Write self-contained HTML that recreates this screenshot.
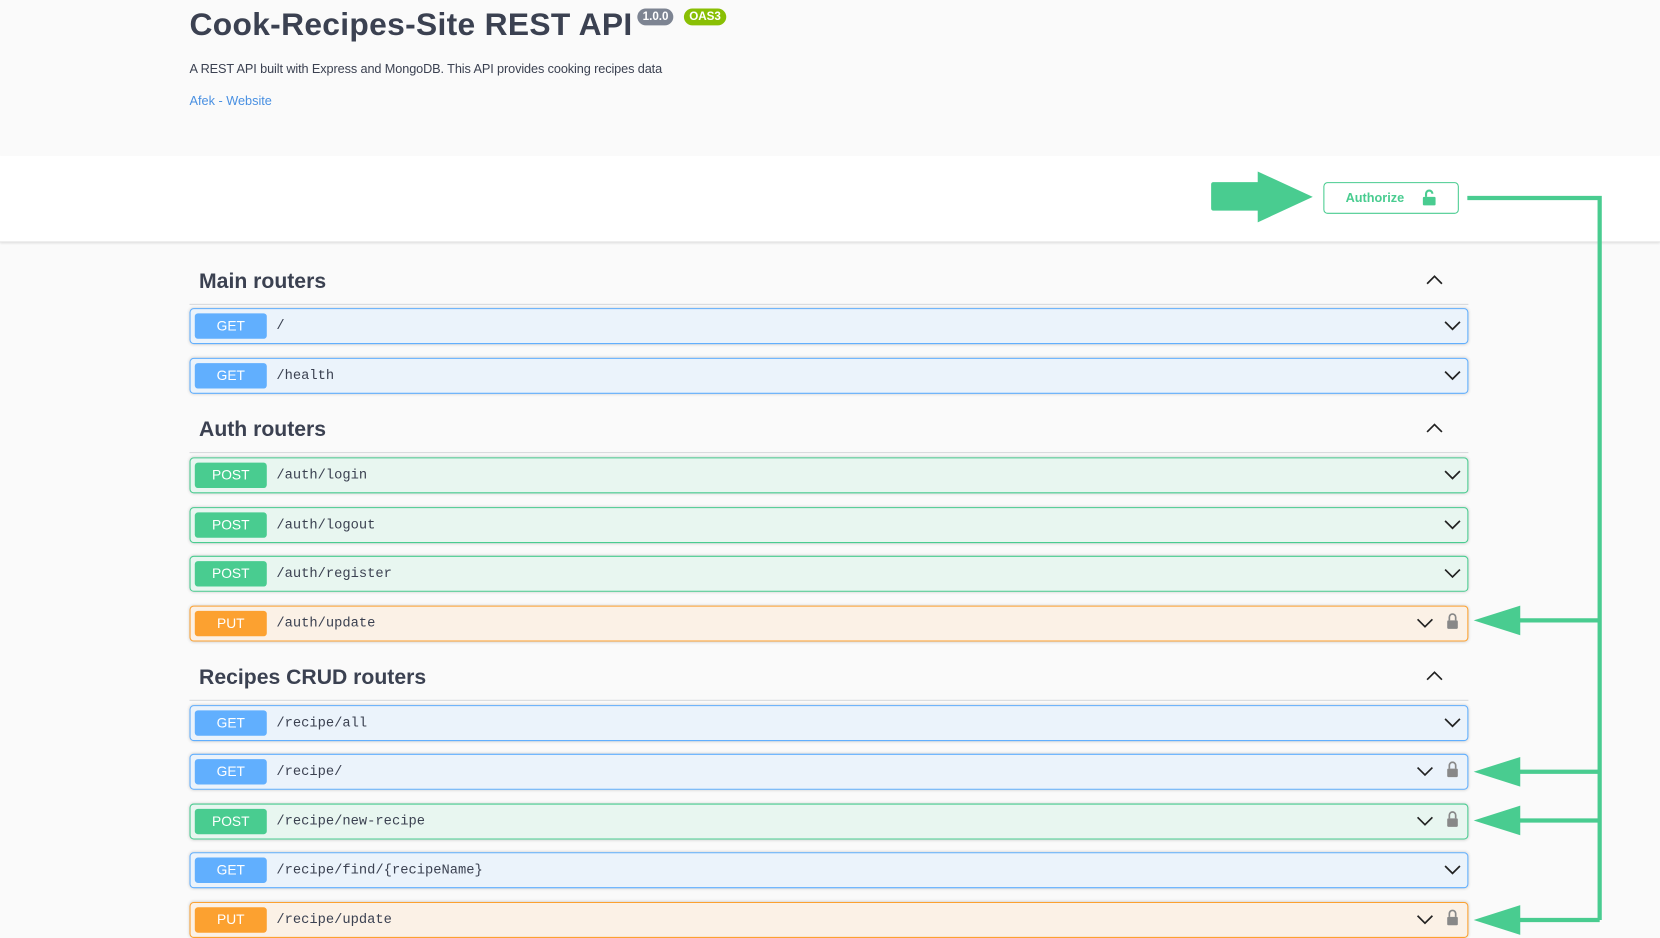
<!DOCTYPE html>
<html><head><meta charset="utf-8"><style>
html,body{margin:0;padding:0;width:1660px;height:936px;overflow:hidden;background:#fafafa;font-family:"Liberation Sans",sans-serif}
#w{position:absolute;left:0;top:0;width:1568px;height:884px;transform:scale(1.05868);transform-origin:0 0}
.a{position:absolute}
h1{position:absolute;left:179px;top:7px;margin:0;font-size:30px;font-weight:bold;color:#3b4151;letter-spacing:0.3px}
.badge{position:absolute;font-size:11px;font-weight:bold;color:#fff;border-radius:8px;padding:1px 5px;line-height:14px}
.band{position:absolute;left:0;top:147px;width:1568px;height:81px;background:#fff;border-bottom:1px solid #e3e3e3;box-shadow:0 1px 2px rgba(0,0,0,.1)}
.sec{position:absolute;left:179px;width:1208px;border-bottom:1px solid #d7d9dc;height:40px}
.sec span{position:absolute;left:9px;top:8px;font-size:20px;font-weight:bold;color:#3b4151}
.row{position:absolute;left:179px;width:1206px;height:32px;border:1px solid;border-radius:4px;box-shadow:0 0 3px rgba(0,0,0,.19)}
.m{position:absolute;left:4px;top:4px;width:68px;height:24px;border-radius:3px;color:#fff;font-size:13px;text-align:center;line-height:24px}
.p{position:absolute;left:81px;top:8px;font-family:"Liberation Mono",monospace;font-size:13px;color:#3b4151}
.get{background:#ebf3fb;border-color:#61affe}.get .m{background:#61affe}
.post{background:#e8f6f0;border-color:#49cc90}.post .m{background:#49cc90}
.put{background:#fbf1e6;border-color:#fca130}.put .m{background:#fca130}
.chev{position:absolute;top:11px}
</style></head><body><div id="w">
<h1>Cook-Recipes-Site REST API</h1>
<div class="badge" style="left:602px;top:8px;background:#7d8492">1.0.0</div>
<div class="badge" style="left:646px;top:8px;background:#89bf04">OAS3</div>
<div class="a" style="left:179px;top:58px;font-size:12px;color:#3b4151;letter-spacing:-0.1px">A REST API built with Express and MongoDB. This API provides cooking recipes data</div>
<div class="a" style="left:179px;top:88px;font-size:12px;color:#4990e2">Afek - Website</div>
<div class="band"></div>
<div class="a" style="left:1250px;top:172px;width:126px;height:28px;border:1px solid #49cc90;border-radius:4px;background:#fff"><span class="a" style="left:20px;top:7px;font-size:12px;font-weight:bold;color:#49cc90">Authorize</span>
<svg class="a" style="left:92px;top:6px" width="14" height="16" viewBox="0 0 14 16"><path d="M4 7V4a3 3 0 0 1 6 0" fill="none" stroke="#49cc90" stroke-width="2"/><rect x="1" y="7" width="12" height="8" rx="1" fill="#49cc90"/></svg></div>
<svg class="a" style="left:0;top:0" width="1568" height="884">
<g fill="#49cc90" stroke="none">
<rect x="1144" y="172" width="48" height="27" rx="2"/><polygon points="1188,162 1240,186 1188,210"/>
</g>
<path d="M1386 187H1511V869M1511 586H1430M1511 729H1430M1511 775H1430M1511 869H1430" stroke="#49cc90" stroke-width="4" fill="none"/>
<g fill="#49cc90">
<polygon points="1392,586 1436,572 1436,600"/><polygon points="1392,729 1436,715 1436,743"/><polygon points="1392,775 1436,761 1436,789"/><polygon points="1392,869 1436,855 1436,883"/>
</g>
</svg>

<div class="sec" style="top:247px"><span>Main routers</span><svg class="a" style="left:1168px;top:12px" width="16" height="10"><path d="M1 9L8 2l7 7" fill="none" stroke="#222" stroke-width="1.6"/></svg></div>
<div class="sec" style="top:387px"><span>Auth routers</span><svg class="a" style="left:1168px;top:12px" width="16" height="10"><path d="M1 9L8 2l7 7" fill="none" stroke="#222" stroke-width="1.6"/></svg></div>
<div class="sec" style="top:621px"><span>Recipes CRUD routers</span><svg class="a" style="left:1168px;top:12px" width="16" height="10"><path d="M1 9L8 2l7 7" fill="none" stroke="#222" stroke-width="1.6"/></svg></div>

<div class="row get" style="top:291px"><div class="m">GET</div><div class="p">/</div><svg class="chev" style="left:1184px" width="16" height="10"><path d="M1 1l7 7 7-7" fill="none" stroke="#222" stroke-width="1.6"/></svg></div>
<div class="row get" style="top:338px"><div class="m">GET</div><div class="p">/health</div><svg class="chev" style="left:1184px" width="16" height="10"><path d="M1 1l7 7 7-7" fill="none" stroke="#222" stroke-width="1.6"/></svg></div>
<div class="row post" style="top:432px"><div class="m">POST</div><div class="p">/auth/login</div><svg class="chev" style="left:1184px" width="16" height="10"><path d="M1 1l7 7 7-7" fill="none" stroke="#222" stroke-width="1.6"/></svg></div>
<div class="row post" style="top:479px"><div class="m">POST</div><div class="p">/auth/logout</div><svg class="chev" style="left:1184px" width="16" height="10"><path d="M1 1l7 7 7-7" fill="none" stroke="#222" stroke-width="1.6"/></svg></div>
<div class="row post" style="top:525px"><div class="m">POST</div><div class="p">/auth/register</div><svg class="chev" style="left:1184px" width="16" height="10"><path d="M1 1l7 7 7-7" fill="none" stroke="#222" stroke-width="1.6"/></svg></div>
<div class="row put" style="top:572px"><div class="m">PUT</div><div class="p">/auth/update</div><svg class="chev" style="left:1158px" width="16" height="10"><path d="M1 1l7 7 7-7" fill="none" stroke="#222" stroke-width="1.6"/></svg><svg class="a" style="left:1186px;top:6px" width="12" height="16"><path d="M3 7V4a3 3 0 0 1 6 0v3" fill="none" stroke="#888" stroke-width="1.6"/><rect x="1" y="7" width="10" height="8" rx="1" fill="#888"/></svg></div>
<div class="row get" style="top:666px"><div class="m">GET</div><div class="p">/recipe/all</div><svg class="chev" style="left:1184px" width="16" height="10"><path d="M1 1l7 7 7-7" fill="none" stroke="#222" stroke-width="1.6"/></svg></div>
<div class="row get" style="top:712px"><div class="m">GET</div><div class="p">/recipe/</div><svg class="chev" style="left:1158px" width="16" height="10"><path d="M1 1l7 7 7-7" fill="none" stroke="#222" stroke-width="1.6"/></svg><svg class="a" style="left:1186px;top:6px" width="12" height="16"><path d="M3 7V4a3 3 0 0 1 6 0v3" fill="none" stroke="#888" stroke-width="1.6"/><rect x="1" y="7" width="10" height="8" rx="1" fill="#888"/></svg></div>
<div class="row post" style="top:759px"><div class="m">POST</div><div class="p">/recipe/new-recipe</div><svg class="chev" style="left:1158px" width="16" height="10"><path d="M1 1l7 7 7-7" fill="none" stroke="#222" stroke-width="1.6"/></svg><svg class="a" style="left:1186px;top:6px" width="12" height="16"><path d="M3 7V4a3 3 0 0 1 6 0v3" fill="none" stroke="#888" stroke-width="1.6"/><rect x="1" y="7" width="10" height="8" rx="1" fill="#888"/></svg></div>
<div class="row get" style="top:805px"><div class="m">GET</div><div class="p">/recipe/find/{recipeName}</div><svg class="chev" style="left:1184px" width="16" height="10"><path d="M1 1l7 7 7-7" fill="none" stroke="#222" stroke-width="1.6"/></svg></div>
<div class="row put" style="top:852px"><div class="m">PUT</div><div class="p">/recipe/update</div><svg class="chev" style="left:1158px" width="16" height="10"><path d="M1 1l7 7 7-7" fill="none" stroke="#222" stroke-width="1.6"/></svg><svg class="a" style="left:1186px;top:6px" width="12" height="16"><path d="M3 7V4a3 3 0 0 1 6 0v3" fill="none" stroke="#888" stroke-width="1.6"/><rect x="1" y="7" width="10" height="8" rx="1" fill="#888"/></svg></div>
</div></body></html>
